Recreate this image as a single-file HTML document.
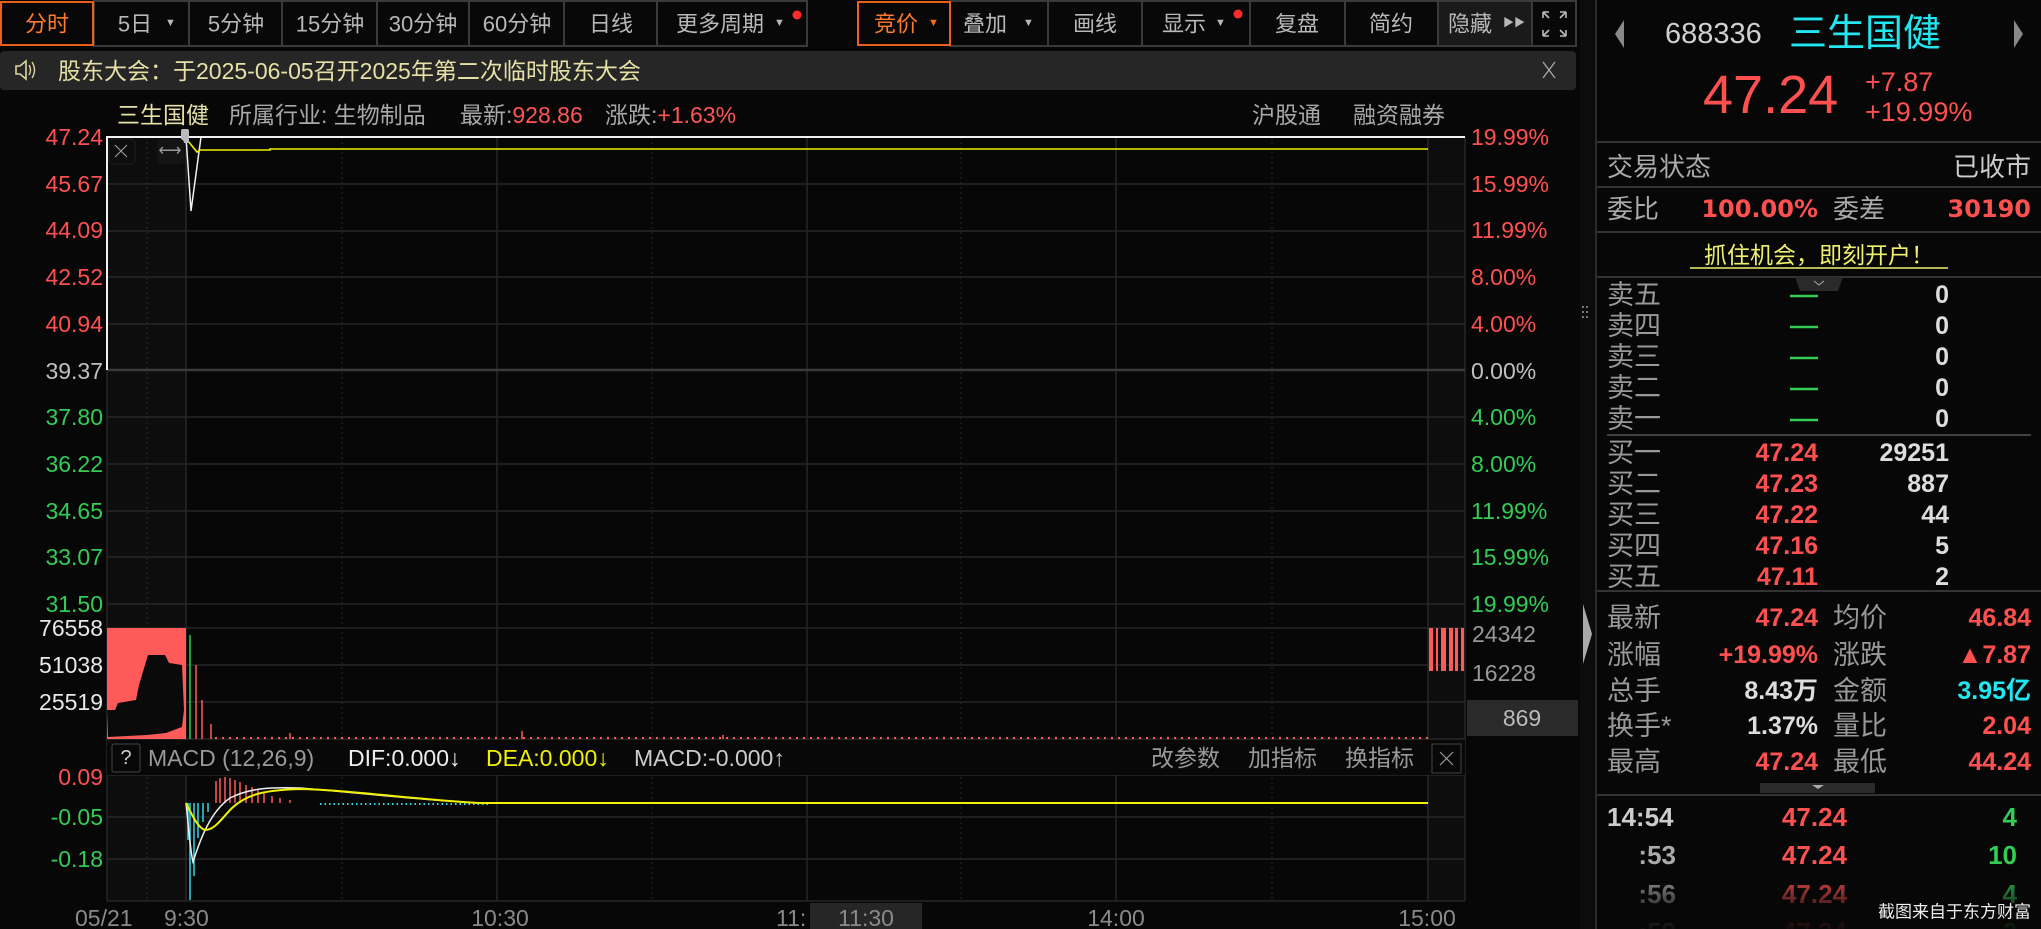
<!DOCTYPE html>
<html><head><meta charset="utf-8"><style>
html,body{margin:0;padding:0;background:#070707;width:2041px;height:929px;overflow:hidden}
svg{display:block}
text{font-family:"Liberation Sans","Noto Sans CJK SC",sans-serif;dominant-baseline:central}
.b{font-family:"DejaVu Sans","Noto Sans CJK SC",sans-serif;font-weight:bold}
</style></head><body>
<svg width="2041" height="929" viewBox="0 0 2041 929" xmlns="http://www.w3.org/2000/svg">
<rect width="2041" height="929" fill="#070707"/>
<!-- toolbar -->
<g stroke="#3a3a3a" stroke-width="2" fill="#080808">
<rect x="94" y="1" width="713" height="45"/>
<rect x="950" y="1" width="626" height="45"/>
</g>
<g stroke="#3a3a3a" stroke-width="2">
<line x1="189" y1="1" x2="189" y2="46"/><line x1="282" y1="1" x2="282" y2="46"/><line x1="377" y1="1" x2="377" y2="46"/><line x1="469" y1="1" x2="469" y2="46"/><line x1="564" y1="1" x2="564" y2="46"/><line x1="657" y1="1" x2="657" y2="46"/>
<line x1="1048" y1="1" x2="1048" y2="46"/><line x1="1142" y1="1" x2="1142" y2="46"/><line x1="1250" y1="1" x2="1250" y2="46"/><line x1="1345" y1="1" x2="1345" y2="46"/><line x1="1438" y1="1" x2="1438" y2="46"/><line x1="1532" y1="1" x2="1532" y2="46"/>
</g>
<rect x="1439" y="2" width="92" height="43" fill="#1a1a1a"/>
<rect x="1" y="2" width="92" height="43" fill="#080808" stroke="#e8601c" stroke-width="2"/>
<rect x="858" y="2" width="92" height="43" fill="#080808" stroke="#e8601c" stroke-width="2"/>
<g font-size="22" fill="#b8b8b8" text-anchor="middle">
<text x="47" y="24" fill="#ff7a2a">分时</text>
<text x="135" y="24">5日</text><text x="236" y="24">5分钟</text><text x="330" y="24">15分钟</text><text x="423" y="24">30分钟</text><text x="517" y="24">60分钟</text><text x="611" y="24">日线</text><text x="720" y="24">更多周期</text>
<text x="896" y="24" fill="#ff7a2a">竞价</text><text x="985" y="24">叠加</text><text x="1095" y="24">画线</text><text x="1184" y="24">显示</text><text x="1297" y="24">复盘</text><text x="1391" y="24">简约</text><text x="1470" y="24">隐藏</text>
</g>
<g font-size="11" fill="#b8b8b8"><text x="165" y="23">▼</text><text x="774" y="23">▼</text><text x="928" y="23" fill="#ff6a1a">▼</text><text x="1023" y="23">▼</text><text x="1215" y="23">▼</text><text x="1503" y="23">▶▶</text></g>
<circle cx="797" cy="15" r="4.5" fill="#ff2a2a"/><circle cx="1238" cy="14" r="4.5" fill="#ff2a2a"/>
<g stroke="#bbb" stroke-width="1.6" fill="none"><path d="M1543 12h6M1543 12v6M1566 12h-6M1566 12v6M1543 36h6M1543 36v-6M1566 36h-6M1566 36v-6M1544 13l5 5M1565 13l-5 5M1544 35l5-5M1565 35l-5-5"/></g>
<!-- notice bar -->
<rect x="0" y="51" width="1576" height="39" rx="4" fill="#262626"/>
<path d="M16 66h4l6-5v18l-6-5h-4z" fill="none" stroke="#ddd6a0" stroke-width="1.6"/>
<path d="M29 65q3 5 0 10M32 62q5 8 0 16" fill="none" stroke="#ddd6a0" stroke-width="1.4"/>
<text x="58" y="71" font-size="23" fill="#e6e0a6">股东大会：于2025-06-05召开2025年第二次临时股东大会</text>
<path d="M1543 62l12 16M1555 62l-12 16" stroke="#aaa" stroke-width="1.3"/>
<!-- info line -->
<text x="117" y="115" font-size="23" fill="#e6e0a6">三生国健</text>
<text x="229" y="115" font-size="23" fill="#a8a8a8">所属行业: 生物制品</text>
<text x="460" y="115" font-size="23" fill="#a8a8a8">最新:<tspan fill="#ff5555">928.86</tspan></text>
<text x="605" y="115" font-size="23" fill="#a8a8a8">涨跌:<tspan fill="#ff5555">+1.63%</tspan></text>
<text x="1252" y="115" font-size="23" fill="#a8a8a8">沪股通</text>
<text x="1353" y="115" font-size="23" fill="#a8a8a8">融资融券</text>
<!-- chart backgrounds -->
<rect x="107" y="137" width="79" height="764" fill="#0d0d0d"/>
<rect x="1428" y="137" width="37" height="764" fill="#0d0d0d"/>
<!-- price grid -->
<g stroke="#262626" stroke-width="1.5">
<line x1="107" y1="184" x2="1465" y2="184"/><line x1="107" y1="231" x2="1465" y2="231"/><line x1="107" y1="277" x2="1465" y2="277"/><line x1="107" y1="324" x2="1465" y2="324"/>
<line x1="107" y1="417" x2="1465" y2="417"/><line x1="107" y1="464" x2="1465" y2="464"/><line x1="107" y1="511" x2="1465" y2="511"/><line x1="107" y1="557" x2="1465" y2="557"/><line x1="107" y1="604" x2="1465" y2="604"/>
<line x1="107" y1="628" x2="1465" y2="628"/><line x1="107" y1="665" x2="1465" y2="665"/><line x1="107" y1="702" x2="1465" y2="702"/><line x1="107" y1="739" x2="1465" y2="739"/>
<line x1="107" y1="775" x2="1465" y2="775"/><line x1="107" y1="817" x2="1465" y2="817"/><line x1="107" y1="859" x2="1465" y2="859"/><line x1="107" y1="901" x2="1465" y2="901"/>
<line x1="186" y1="137" x2="186" y2="901"/><line x1="497" y1="137" x2="497" y2="901"/><line x1="807" y1="137" x2="807" y2="901"/><line x1="1116" y1="137" x2="1116" y2="901"/><line x1="1428" y1="137" x2="1428" y2="901"/><line x1="1465" y1="137" x2="1465" y2="901"/><line x1="107" y1="137" x2="107" y2="901"/>
</g>
<line x1="107" y1="370" x2="1465" y2="370" stroke="#3a3a3a" stroke-width="2.5"/>
<g stroke="#2a2a2a" stroke-width="1" stroke-dasharray="2 3">
<line x1="147" y1="137" x2="147" y2="901"/><line x1="342" y1="137" x2="342" y2="901"/><line x1="652" y1="137" x2="652" y2="901"/><line x1="961" y1="137" x2="961" y2="901"/><line x1="1272" y1="137" x2="1272" y2="901"/>
</g>
<!-- price lines -->
<path d="M107 370V137H1465" fill="none" stroke="#f0f0f0" stroke-width="2"/>
<path d="M186 137L191 211L201 137" fill="none" stroke="#f0f0f0" stroke-width="1.5"/>
<path d="M188 141L197 152L200 150H270V149H1428" fill="none" stroke="#f0f000" stroke-width="1.6"/>
<rect x="181" y="129" width="8" height="14" rx="2" fill="#bbb"/>
<rect x="109" y="139" width="26" height="25" rx="4" fill="none" stroke="#1e1e1e"/>
<path d="M115 145l12 12M127 145l-12 12" stroke="#999" stroke-width="1.2"/>
<rect x="157" y="139" width="27" height="25" rx="4" fill="#141414"/>
<text x="170" y="151" font-size="16" fill="#999" text-anchor="middle">⟷</text>
<!-- left axis -->
<g font-size="23" text-anchor="end">
<text x="103" y="137" fill="#ff5050">47.24</text><text x="103" y="184" fill="#ff5050">45.67</text><text x="103" y="230" fill="#ff5050">44.09</text><text x="103" y="277" fill="#ff5050">42.52</text><text x="103" y="324" fill="#ff5050">40.94</text>
<text x="103" y="371" fill="#c0c0c0">39.37</text>
<text x="103" y="417" fill="#33cc55">37.80</text><text x="103" y="464" fill="#33cc55">36.22</text><text x="103" y="511" fill="#33cc55">34.65</text><text x="103" y="557" fill="#33cc55">33.07</text><text x="103" y="604" fill="#33cc55">31.50</text>
<text x="103" y="628" fill="#e8e8e8">76558</text><text x="103" y="665" fill="#e8e8e8">51038</text><text x="103" y="702" fill="#e8e8e8">25519</text>
<text x="103" y="777" fill="#ff5050">0.09</text><text x="103" y="817" fill="#33cc55">-0.05</text><text x="103" y="859" fill="#33cc55">-0.18</text>
</g>
<!-- right axis -->
<g font-size="23">
<text x="1471" y="137" fill="#ff5050">19.99%</text><text x="1471" y="184" fill="#ff5050">15.99%</text><text x="1471" y="230" fill="#ff5050">11.99%</text><text x="1471" y="277" fill="#ff5050">8.00%</text><text x="1471" y="324" fill="#ff5050">4.00%</text>
<text x="1471" y="371" fill="#c0c0c0">0.00%</text>
<text x="1471" y="417" fill="#33cc55">4.00%</text><text x="1471" y="464" fill="#33cc55">8.00%</text><text x="1471" y="511" fill="#33cc55">11.99%</text><text x="1471" y="557" fill="#33cc55">15.99%</text><text x="1471" y="604" fill="#33cc55">19.99%</text>
<text x="1472" y="634" fill="#999">24342</text><text x="1472" y="673" fill="#999">16228</text><text x="1472" y="712" fill="#999">8114</text>
</g>
<rect x="1467" y="700" width="111" height="36" fill="#2a2a2a"/>
<text x="1522" y="718" font-size="23" fill="#bbb" text-anchor="middle">869</text>
<!-- volume -->
<rect x="107" y="628" width="79" height="111" fill="#ff5a5a"/>
<path d="M107 710L115 710L118 703L136 700L139 685L145 665L148 655L165 655L169 663L182 665L184 710L182 727L166 733L147 735L108 737Z" fill="#0a0a0a"/>
<line x1="190" y1="635" x2="190" y2="739" stroke="#33cc55" stroke-width="1.5"/>
<g stroke="#ff5a5a" stroke-width="1.5">
<line x1="196" y1="665" x2="196" y2="739"/><line x1="202" y1="700" x2="202" y2="739"/><line x1="211" y1="724" x2="211" y2="739"/><line x1="290" y1="733" x2="290" y2="739"/><line x1="522" y1="731" x2="522" y2="739"/><line x1="723" y1="735" x2="723" y2="739"/>
</g>
<line x1="215" y1="738" x2="1428" y2="738" stroke="#ff5a5a" stroke-width="2" stroke-dasharray="2 5"/>
<g fill="#ff5a5a"><rect x="1429" y="628" width="4" height="43"/><rect x="1436" y="628" width="2" height="43"/><rect x="1441" y="628" width="5" height="43"/><rect x="1449" y="628" width="4" height="43"/><rect x="1455" y="628" width="3" height="43"/><rect x="1461" y="628" width="3" height="43"/></g>
<!-- MACD header -->
<rect x="107" y="740" width="1358" height="35" fill="#080808"/>
<rect x="112" y="744" width="28" height="28" rx="2" fill="none" stroke="#444"/>
<text x="126" y="758" font-size="20" fill="#ccc" text-anchor="middle">?</text>
<g font-size="23"><text x="148" y="758" fill="#999">MACD (12,26,9)</text><text x="348" y="758" fill="#eee">DIF:0.000↓</text><text x="486" y="758" fill="#f0f000">DEA:0.000↓</text><text x="634" y="758" fill="#ccc">MACD:-0.000↑</text>
<text x="1151" y="758" fill="#999">改参数</text><text x="1248" y="758" fill="#999">加指标</text><text x="1345" y="758" fill="#999">换指标</text></g>
<rect x="1432" y="744" width="29" height="29" fill="none" stroke="#444"/>
<path d="M1440 752l13 13M1453 752l-13 13" stroke="#999" stroke-width="1.2"/>
<!-- MACD -->
<g stroke="#33d6e6" stroke-width="1.5">
<line x1="188" y1="803" x2="188" y2="840"/><line x1="190" y1="803" x2="190" y2="900"/><line x1="194" y1="803" x2="194" y2="876"/><line x1="198" y1="803" x2="198" y2="838"/><line x1="203" y1="803" x2="203" y2="822"/><line x1="208" y1="803" x2="208" y2="812"/>
</g>
<g stroke="#ff5a5a" stroke-width="1.5">
<line x1="216" y1="803" x2="216" y2="781"/><line x1="220" y1="803" x2="220" y2="778"/><line x1="225" y1="803" x2="225" y2="777"/><line x1="230" y1="803" x2="230" y2="778"/><line x1="235" y1="803" x2="235" y2="780"/><line x1="240" y1="803" x2="240" y2="782"/><line x1="246" y1="803" x2="246" y2="785"/><line x1="252" y1="803" x2="252" y2="787"/><line x1="258" y1="803" x2="258" y2="790"/><line x1="264" y1="803" x2="264" y2="793"/><line x1="272" y1="803" x2="272" y2="796"/><line x1="280" y1="803" x2="280" y2="798"/><line x1="290" y1="803" x2="290" y2="800"/>
</g>
<line x1="320" y1="804" x2="490" y2="804" stroke="#33d6e6" stroke-width="2" stroke-dasharray="1.5 3"/>
<path d="M186 803C188 820 190 850 193 862C200 840 210 812 230 798C250 788 270 787 300 788C350 792 420 800 480 803" fill="none" stroke="#eee" stroke-width="1.5"/>
<path d="M186 803C192 815 198 828 205 830C215 830 222 818 232 808C245 796 260 790 300 789C350 790 420 800 480 803H1428" fill="none" stroke="#f0f000" stroke-width="2"/>
<!-- time axis -->
<rect x="810" y="903" width="112" height="26" fill="#262626"/>
<g font-size="23" fill="#8a8a8a"><text x="75" y="918">05/21</text><text x="164" y="918">9:30</text><text x="500" y="918" text-anchor="middle">10:30</text><text x="776" y="918">11:</text><text x="866" y="918" text-anchor="middle">11:30</text><text x="1116" y="918" text-anchor="middle">14:00</text><text x="1427" y="918" text-anchor="middle">15:00</text></g>
<!-- side strip -->
<rect x="1580" y="0" width="16" height="929" fill="#0c0c0c"/>
<line x1="1596" y1="0" x2="1596" y2="929" stroke="#2a2a2a" stroke-width="2"/>
<path d="M1583 604l9 30l-9 30z" fill="#aaa"/>
<g fill="#777"><rect x="1582" y="306" width="2" height="2"/><rect x="1582" y="311" width="2" height="2"/><rect x="1582" y="316" width="2" height="2"/><rect x="1586" y="306" width="2" height="2"/><rect x="1586" y="311" width="2" height="2"/><rect x="1586" y="316" width="2" height="2"/></g>
<!-- right panel -->
<path d="M1624 20l-9 14l9 14z" fill="#888"/><path d="M2014 20l9 14l-9 14z" fill="#888"/>
<text x="1665" y="34" font-size="29" fill="#d0d0d0">688336</text>
<text x="1789" y="34" font-size="38" fill="#22e6f0">三生国健</text>
<text x="1703" y="95" font-size="54" fill="#ff5050">47.24</text>
<text x="1865" y="82" font-size="27" fill="#ff5050">+7.87</text>
<text x="1865" y="112" font-size="27" fill="#ff5050">+19.99%</text>
<g stroke="#333" stroke-width="2"><line x1="1597" y1="142" x2="2041" y2="142"/><line x1="1597" y1="187" x2="2041" y2="187"/><line x1="1597" y1="232" x2="2041" y2="232"/><line x1="1597" y1="277" x2="2041" y2="277"/><line x1="1597" y1="591" x2="2041" y2="591"/><line x1="1597" y1="795" x2="2041" y2="795"/></g>
<line x1="1607" y1="435" x2="2031" y2="435" stroke="#555" stroke-width="1.5"/>
<text x="1607" y="167" font-size="26" fill="#aaa">交易状态</text>
<text x="2031" y="167" font-size="26" fill="#ccc" text-anchor="end">已收市</text>
<text x="1607" y="209" font-size="26" fill="#aaa">委比</text>
<text x="1818" y="209" font-size="24" fill="#ff5050" text-anchor="end" class="b">100.00%</text>
<text x="1833" y="209" font-size="26" fill="#aaa">委差</text>
<text x="2031" y="209" font-size="24" fill="#ff5050" text-anchor="end" class="b">30190</text>
<text x="1819" y="255" font-size="23" fill="#f0f070" text-anchor="middle">抓住机会，即刻开户！</text>
<line x1="1690" y1="268" x2="1948" y2="268" stroke="#f0f070" stroke-width="1.5"/>
<path d="M1795 277h48l-5 14h-38z" fill="#2a2a2a"/><path d="M1814 281l5 4l5-4" stroke="#aaa" fill="none"/>
<g font-size="27" fill="#999">
<text x="1607" y="295">卖五</text><text x="1607" y="326">卖四</text><text x="1607" y="357">卖三</text><text x="1607" y="388">卖二</text><text x="1607" y="419">卖一</text>
<text x="1607" y="453">买一</text><text x="1607" y="484">买二</text><text x="1607" y="515">买三</text><text x="1607" y="546">买四</text><text x="1607" y="577">买五</text>
<text x="1607" y="618">最新</text><text x="1607" y="655">涨幅</text><text x="1607" y="691">总手</text><text x="1607" y="726">换手*</text><text x="1607" y="762">最高</text>
<text x="1833" y="618">均价</text><text x="1833" y="655">涨跌</text><text x="1833" y="691">金额</text><text x="1833" y="726">量比</text><text x="1833" y="762">最低</text>
</g>
<g stroke="#33cc55" stroke-width="2.5"><line x1="1790" y1="296" x2="1818" y2="296"/><line x1="1790" y1="327" x2="1818" y2="327"/><line x1="1790" y1="358" x2="1818" y2="358"/><line x1="1790" y1="389" x2="1818" y2="389"/><line x1="1790" y1="420" x2="1818" y2="420"/></g>
<g font-size="25" class="b" text-anchor="end" fill="#ddd">
<text x="1949" y="295">0</text><text x="1949" y="326">0</text><text x="1949" y="357">0</text><text x="1949" y="388">0</text><text x="1949" y="419">0</text>
<text x="1949" y="453">29251</text><text x="1949" y="484">887</text><text x="1949" y="515">44</text><text x="1949" y="546">5</text><text x="1949" y="577">2</text>
</g>
<g font-size="25" class="b" text-anchor="end" fill="#ff5050">
<text x="1818" y="453">47.24</text><text x="1818" y="484">47.23</text><text x="1818" y="515">47.22</text><text x="1818" y="546">47.16</text><text x="1818" y="577">47.11</text>
<text x="1818" y="618">47.24</text><text x="1818" y="655">+19.99%</text><text x="1818" y="691" fill="#ddd">8.43万</text><text x="1818" y="726" fill="#ddd">1.37%</text><text x="1818" y="762">47.24</text>
<text x="2031" y="618">46.84</text><text x="2031" y="655">▲7.87</text><text x="2031" y="691" fill="#22e6f0">3.95亿</text><text x="2031" y="726">2.04</text><text x="2031" y="762">44.24</text>
</g>
<rect x="1760" y="783" width="115" height="10" fill="#2a2a2a"/><path d="M1812 785h12l-6 4z" fill="#aaa"/>
<g font-size="26" class="b">
<text x="1607" y="817" fill="#ccc">14:54</text><text x="1676" y="855" fill="#aaa" text-anchor="end">:53</text><text x="1676" y="894" fill="#aaa" text-anchor="end">:56</text><text x="1676" y="932" fill="#aaa" text-anchor="end">:59</text>
<text x="1847" y="817" fill="#ff5050" text-anchor="end">47.24</text><text x="1847" y="855" fill="#ff5050" text-anchor="end">47.24</text><text x="1847" y="894" fill="#ff5050" text-anchor="end">47.24</text><text x="1847" y="932" fill="#ff5050" text-anchor="end">47.24</text>
<text x="2017" y="817" fill="#33cc55" text-anchor="end">4</text><text x="2017" y="855" fill="#33cc55" text-anchor="end">10</text><text x="2017" y="894" fill="#33cc55" text-anchor="end">4</text><text x="2017" y="932" fill="#33cc55" text-anchor="end">2</text>
</g>
<defs><linearGradient id="fd" x1="0" y1="0" x2="0" y2="1"><stop offset="0" stop-color="#070707" stop-opacity="0"/><stop offset="0.5" stop-color="#070707" stop-opacity="0.6"/><stop offset="1" stop-color="#070707" stop-opacity="0.95"/></linearGradient></defs>
<rect x="1597" y="870" width="444" height="59" fill="url(#fd)"/>
<text x="2031" y="912" font-size="17" fill="#eee" text-anchor="end">截图来自于东方财富</text>
</svg>
</body></html>
